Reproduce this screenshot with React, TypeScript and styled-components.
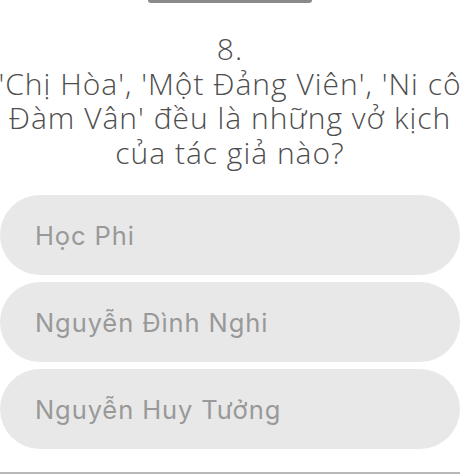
import React from "react";
import styled, { createGlobalStyle } from "styled-components";

const Global = createGlobalStyle`
  html, body { margin: 0; padding: 0; background: #ffffff; }
  #root { width: 460px; height: 474px; overflow: hidden; }
`;

const Page = styled.div`
  width: 460px;
  height: 474px;
  display: flex;
  flex-direction: column;
  align-items: center;
  overflow: hidden;
  position: relative;
`;

const TopHandle = styled.div`
  width: 164px;
  height: 3px;
  background: #8a8a8a;
  border-radius: 0 0 4px 4px;
  flex-shrink: 0;
`;

const QuestionBlock = styled.div`
  margin-top: 29px;
  width: 460px;
  font-family: "Open Sans", "Noto Sans", sans-serif;
  font-weight: 300;
  font-size: 30px;
  line-height: 34.5px;
  letter-spacing: 1px;
  color: #4d4d4d;
  text-align: center;
  white-space: nowrap;
  display: flex;
  flex-direction: column;
  align-items: center;
`;

const Number = styled.div``;

const QuestionText = styled.p`
  margin: 0;
`;

const Options = styled.div`
  margin-top: 25px;
  width: 460px;
  display: flex;
  flex-direction: column;
  gap: 7px;
`;

const Option = styled.div`
  height: 80px;
  border-radius: 40px;
  background: #e8e8e8;
  display: flex;
  align-items: center;
  padding-left: 35px;
  font-family: Inter, "Noto Sans", sans-serif;
  font-size: 25.5px;
  letter-spacing: 0.9px;
  color: #999999;
`;

const BottomRule = styled.div`
  position: absolute;
  left: 0;
  right: 0;
  bottom: 0;
  height: 2px;
  background: #b8b8b8;
`;

const answers = ["Học Phi", "Nguyễn Đình Nghi", "Nguyễn Huy Tưởng"];

export default function App() {
  return (
    <>
      <Global />
      <Page>
        <TopHandle />
        <QuestionBlock>
          <Number>8.</Number>
          <QuestionText>
            'Chị Hòa', 'Một Đảng Viên', 'Ni cô
            <br />
            Đàm Vân' đều là những vở kịch
            <br />
            của tác giả nào?
          </QuestionText>
        </QuestionBlock>
        <Options>
          {answers.map((a) => (
            <Option key={a}>{a}</Option>
          ))}
        </Options>
        <BottomRule />
      </Page>
    </>
  );
}
